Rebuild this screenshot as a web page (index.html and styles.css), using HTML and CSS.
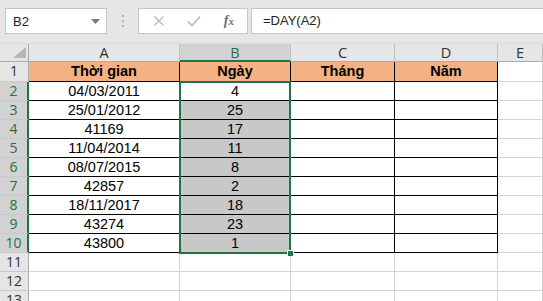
FILE: index.html
```html
<!DOCTYPE html>
<html lang="vi">
<head>
  <meta charset="UTF-8">
  <title>DAY</title>
  <link rel="stylesheet" href="styles.css">
</head>
<body>
  <div class="toolbar">
    <div class="namebox">
      <span>B2</span>
      <svg class="caret" width="9" height="5" viewBox="0 0 9 5"><path d="M0 0h9L4.5 5z" fill="#777"/></svg>
    </div>
    <div class="dots"><i></i><i></i><i></i></div>
    <div class="fxbox">
      <svg width="12" height="12" viewBox="0 0 12 12"><path d="M1.5 1.5l9 9M10.5 1.5l-9 9" stroke="#b8b8b8" stroke-width="1.4" fill="none"/></svg>
      <svg width="14" height="12" viewBox="0 0 14 12"><path d="M1 6.5l4 4 8-9" stroke="#b8b8b8" stroke-width="1.6" fill="none"/></svg>
      <span class="fx">f<small>x</small></span>
    </div>
    <div class="formula">=DAY(A2)</div>
  </div>

  <div class="grid">
    <div class="corner"><svg width="13" height="11" viewBox="0 0 13 11"><path d="M13 0V11H0z" fill="#b4b4b4"/></svg></div>
    <div class="ch">A</div><div class="ch on">B</div><div class="ch">C</div><div class="ch">D</div><div class="ch">E</div>

    <div class="rh">1</div>
    <div class="c t hd">Thời gian</div><div class="c t hd">Ngày</div><div class="c t hd">Tháng</div><div class="c t hd">Năm</div><div class="c"></div>

    <div class="rh on">2</div>
    <div class="c t">04/03/2011</div><div class="c t">4</div><div class="c t"></div><div class="c t"></div><div class="c"></div>
    <div class="rh on">3</div>
    <div class="c t">25/01/2012</div><div class="c t sel">25</div><div class="c t"></div><div class="c t"></div><div class="c"></div>
    <div class="rh on">4</div>
    <div class="c t">41169</div><div class="c t sel">17</div><div class="c t"></div><div class="c t"></div><div class="c"></div>
    <div class="rh on">5</div>
    <div class="c t">11/04/2014</div><div class="c t sel">11</div><div class="c t"></div><div class="c t"></div><div class="c"></div>
    <div class="rh on">6</div>
    <div class="c t">08/07/2015</div><div class="c t sel">8</div><div class="c t"></div><div class="c t"></div><div class="c"></div>
    <div class="rh on">7</div>
    <div class="c t">42857</div><div class="c t sel">2</div><div class="c t"></div><div class="c t"></div><div class="c"></div>
    <div class="rh on">8</div>
    <div class="c t">18/11/2017</div><div class="c t sel">18</div><div class="c t"></div><div class="c t"></div><div class="c"></div>
    <div class="rh on">9</div>
    <div class="c t">43274</div><div class="c t sel">23</div><div class="c t"></div><div class="c t"></div><div class="c"></div>
    <div class="rh on">10</div>
    <div class="c t">43800</div><div class="c t sel">1</div><div class="c t"></div><div class="c t"></div><div class="c"></div>

    <div class="rh">11</div>
    <div class="c"></div><div class="c"></div><div class="c"></div><div class="c"></div><div class="c"></div>
    <div class="rh">12</div>
    <div class="c"></div><div class="c"></div><div class="c"></div><div class="c"></div><div class="c"></div>
    <div class="rh">13</div>
    <div class="c"></div><div class="c"></div><div class="c"></div><div class="c"></div><div class="c"></div>

    <div class="selection"><span class="handle"></span></div>
  </div>
</body>
</html>
```

FILE: styles.css
```css
* {
  box-sizing: border-box;
}

body {
  margin: 0;
  background: #e6e6e6;
  overflow: hidden;
  font-family: 'Liberation Sans', Arial, sans-serif;
}

.toolbar {
  height: 44px;
  display: flex;
  align-items: flex-start;
  padding: 8px 0 0 5px;
  border-bottom: 1px solid #dcdcdc;
}

.namebox {
  width: 102px;
  height: 26px;
  background: white;
  border: 1px solid #c6c6c6;
  display: flex;
  align-items: center;
  justify-content: space-between;
  padding: 0 6px 0 7px;
  font-size: 13px;
  color: #222;
}

.dots {
  width: 31px;
  height: 26px;
  display: flex;
  flex-direction: column;
  align-items: center;
  justify-content: center;
  gap: 3px;
}

.dots i {
  width: 2px;
  height: 2px;
  background: #b0b0b0;
}

.fxbox {
  width: 110px;
  height: 26px;
  background: white;
  border: 1px solid #c6c6c6;
  display: flex;
  align-items: center;
  justify-content: space-between;
  padding: 0 13px 0 14px;
}

.fx {
  font-family: 'Liberation Serif', serif;
  font-style: italic;
  font-weight: bold;
  font-size: 14px;
  color: #707070;
}

.fx small {
  font-size: 11px;
}

.formula {
  flex: 1;
  height: 26px;
  margin-left: 3px;
  background: white;
  border: 1px solid #c6c6c6;
  border-right: none;
  padding: 4px 0 0 11px;
  font-size: 13px;
  color: #222;
}

.grid {
  position: relative;
  display: grid;
  grid-template-columns: 29px 151px 111px 104px 103px 1fr;
  grid-template-rows: 18px 20px repeat(12, 19px);
  background: white;
}

.corner {
  background: #e6e6e6;
  border-right: 1px solid #ababab;
  border-bottom: 1px solid #ababab;
  display: flex;
  align-items: flex-end;
  justify-content: flex-end;
  padding: 0 2px 3px 0;
}

.ch {
  background: #e6e6e6;
  border-right: 1px solid #bfbfbf;
  border-bottom: 1px solid #ababab;
  text-align: center;
  font-family: 'Open Sans', sans-serif;
  font-size: 14.5px;
  line-height: 17px;
  color: #333;
}

.ch.on {
  background: #d2d2d2;
  color: #217346;
  border-bottom: 2px solid #217346;
}

.rh {
  background: #e6e6e6;
  border-right: 1px solid #ababab;
  border-bottom: 1px solid #c8c8c8;
  text-align: center;
  font-family: 'Open Sans', sans-serif;
  font-size: 14px;
  line-height: 18px;
  color: #333;
}

.rh.on {
  background: #d2d2d2;
  color: #217346;
  border-right: 2px solid #217346;
}

.c {
  border-right: 1px solid #d4d4d4;
  border-bottom: 1px solid #d4d4d4;
  text-align: center;
  font-size: 14.5px;
  line-height: 18px;
  color: #000;
}

.c.t {
  border-color: #000;
}

.c.hd {
  background: #f4b183;
  font-weight: bold;
  line-height: 19px;
}

.c.sel {
  background: #c8c8c8;
}

.selection {
  position: absolute;
  left: 179px;
  top: 37px;
  width: 112px;
  height: 173px;
  border: 2px solid #217346;
}

.handle {
  position: absolute;
  right: -5px;
  bottom: -5px;
  width: 7px;
  height: 7px;
  background: #217346;
  border: 1px solid white;
}
```
